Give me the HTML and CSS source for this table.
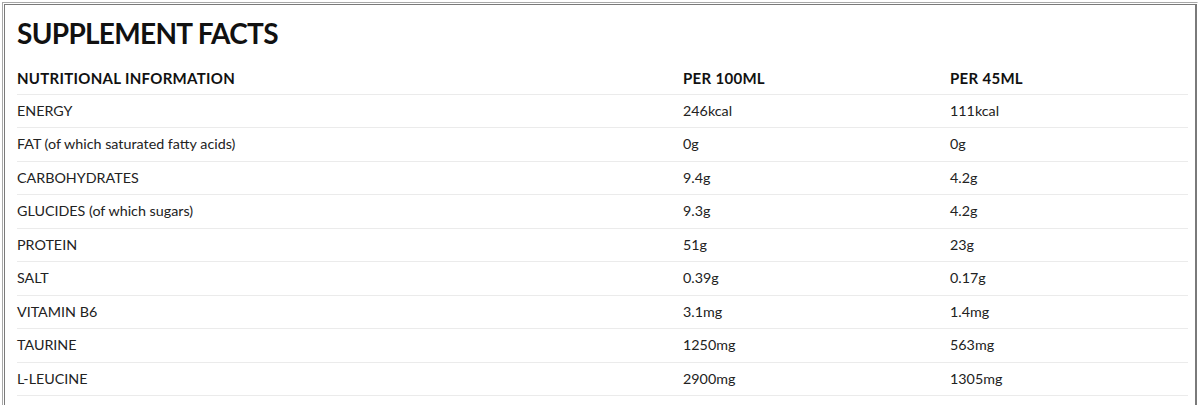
FILE: index.html
```html
<!DOCTYPE html>
<html>
<head>
<meta charset="utf-8">
<link rel="stylesheet" href="styles.css">
</head>
<body>
<div class="frame">
  <div class="panel">
    <h2 class="title">SUPPLEMENT FACTS</h2>
    <table class="facts">
      <thead>
        <tr><th class="c1">NUTRITIONAL INFORMATION</th><th class="c2">PER 100ML</th><th class="c3">PER 45ML</th></tr>
      </thead>
      <tbody>
        <tr><td>ENERGY</td><td>246kcal</td><td>111kcal</td></tr>
        <tr><td>FAT (of which saturated fatty acids)</td><td>0g</td><td>0g</td></tr>
        <tr><td>CARBOHYDRATES</td><td>9.4g</td><td>4.2g</td></tr>
        <tr><td>GLUCIDES (of which sugars)</td><td>9.3g</td><td>4.2g</td></tr>
        <tr><td>PROTEIN</td><td>51g</td><td>23g</td></tr>
        <tr><td>SALT</td><td>0.39g</td><td>0.17g</td></tr>
        <tr><td>VITAMIN B6</td><td>3.1mg</td><td>1.4mg</td></tr>
        <tr><td>TAURINE</td><td>1250mg</td><td>563mg</td></tr>
        <tr><td>L-LEUCINE</td><td>2900mg</td><td>1305mg</td></tr>
      </tbody>
    </table>
  </div>
</div>
</body>
</html>
```
FILE: styles.css
```css
html, body {
  margin: 0;
  padding: 0;
  background: #fff;
}
body {
  font-family: Lato, "Open Sans", Arial, sans-serif;
  color: #222;
}
.frame {
  margin: 2px 2px 0 2px;
  border-top: 1px solid #a8a8a8;
  border-left: 1px solid #a8a8a8;
  border-right: 1px solid #fff;
  padding: 1px 0 0 1px;
}
.panel {
  border-top: 1px solid #7a7a7a;
  border-left: 1px solid #7a7a7a;
  border-right: 2px solid #7a7a7a;
  padding: 11px 8px 0 12px;
  min-height: 420px;
}
.title {
  margin: 0;
  font-size: 28px;
  line-height: 34px;
  font-weight: 700;
  color: #111;
  letter-spacing: -0.7px;
}
.facts {
  margin-top: 10px;
  width: 1171px;
  border-collapse: collapse;
  font-size: 14.3px;
}
.facts th, .facts td {
  text-align: left;
  padding: 6px 0 6px 0;
  line-height: 20.5px;
  border-bottom: 1px solid #ebebeb;
  vertical-align: middle;
}
.facts th {
  font-size: 15px;
  padding: 8px 0 5px 0;
  font-weight: 700;
  color: #111;
  letter-spacing: 0.3px;
}
.facts .c1 { width: 666px; }
.facts .c2 { width: 267px; }
.facts td { color: #222; }
```
